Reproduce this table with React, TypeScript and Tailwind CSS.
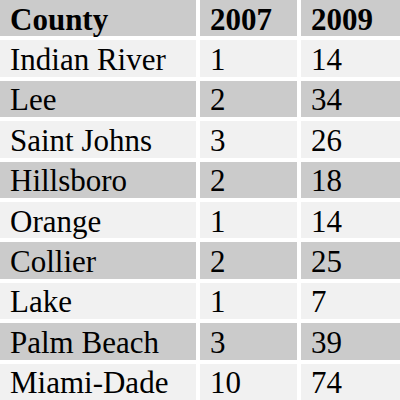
const ROWS = [
  ["Indian River", "1", "14"],
  ["Lee", "2", "34"],
  ["Saint Johns", "3", "26"],
  ["Hillsboro", "2", "18"],
  ["Orange", "1", "14"],
  ["Collier", "2", "25"],
  ["Lake", "1", "7"],
  ["Palm Beach", "3", "39"],
  ["Miami-Dade", "10", "74"],
];

export default function App() {
  return (
    <div className="w-[400px] h-[400px] bg-white grid grid-cols-[196px_97px_99px] grid-rows-[repeat(10,1fr)] gap-x-[4px] gap-y-[4px] text-[31px] leading-none text-black font-['Liberation_Serif',serif]">
      {["County", "2007", "2009"].map((h) => (
        <div key={h} className="bg-[#cbcbcb] font-bold flex items-center pl-[10px]">
          <span className="inline-block scale-y-[1.05]">{h}</span>
        </div>
      ))}
      {ROWS.map((row, i) =>
        row.map((cell, j) => (
          <div
            key={i + "-" + j}
            className={
              "flex items-center pl-[10px] " +
              (i % 2 === 0 ? "bg-[#f1f1f1]" : "bg-[#cbcbcb]")
            }
          >
            <span className="inline-block scale-y-[1.05]">{cell}</span>
          </div>
        ))
      )}
    </div>
  );
}
